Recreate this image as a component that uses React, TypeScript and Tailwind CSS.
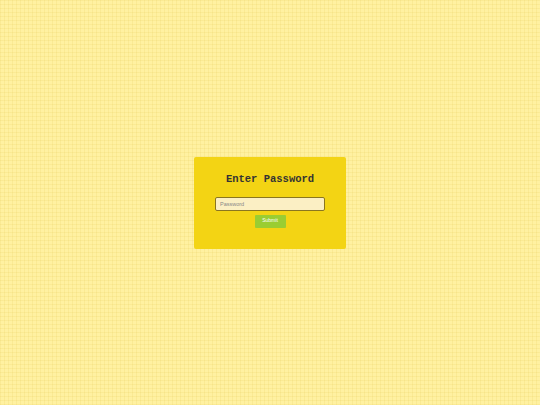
export default function App() {
  return (
    <div className="w-[540px] h-[405px] flex items-center justify-center bg-[#fff1a1] bg-[linear-gradient(to_right,rgba(230,200,90,0.18)_1px,transparent_1px),linear-gradient(to_bottom,rgba(230,200,90,0.18)_1px,transparent_1px)] bg-[size:4px_4px]">
      <div className="w-[152px] h-[92px] bg-[#f3d414] rounded-[2px] flex flex-col items-center pt-[16px]">
        <h1 className="text-[10.5px] leading-[13px] font-bold text-[#333] font-['Liberation_Mono',monospace]">
          Enter Password
        </h1>
        <input
          type="password"
          placeholder="Password"
          className="mt-[11px] w-[110px] h-[14px] px-[4px] text-[5.5px] bg-[#fbefc4] border border-[#8a7620] rounded-[2px] placeholder:text-[#888] font-['Liberation_Sans',sans-serif] outline-none"
        />
        <button className="mt-[4px] w-[31px] h-[13px] bg-[#9acd32] text-white text-[5px] rounded-[1px] font-['Liberation_Sans',sans-serif]">
          Submit
        </button>
      </div>
    </div>
  );
}
